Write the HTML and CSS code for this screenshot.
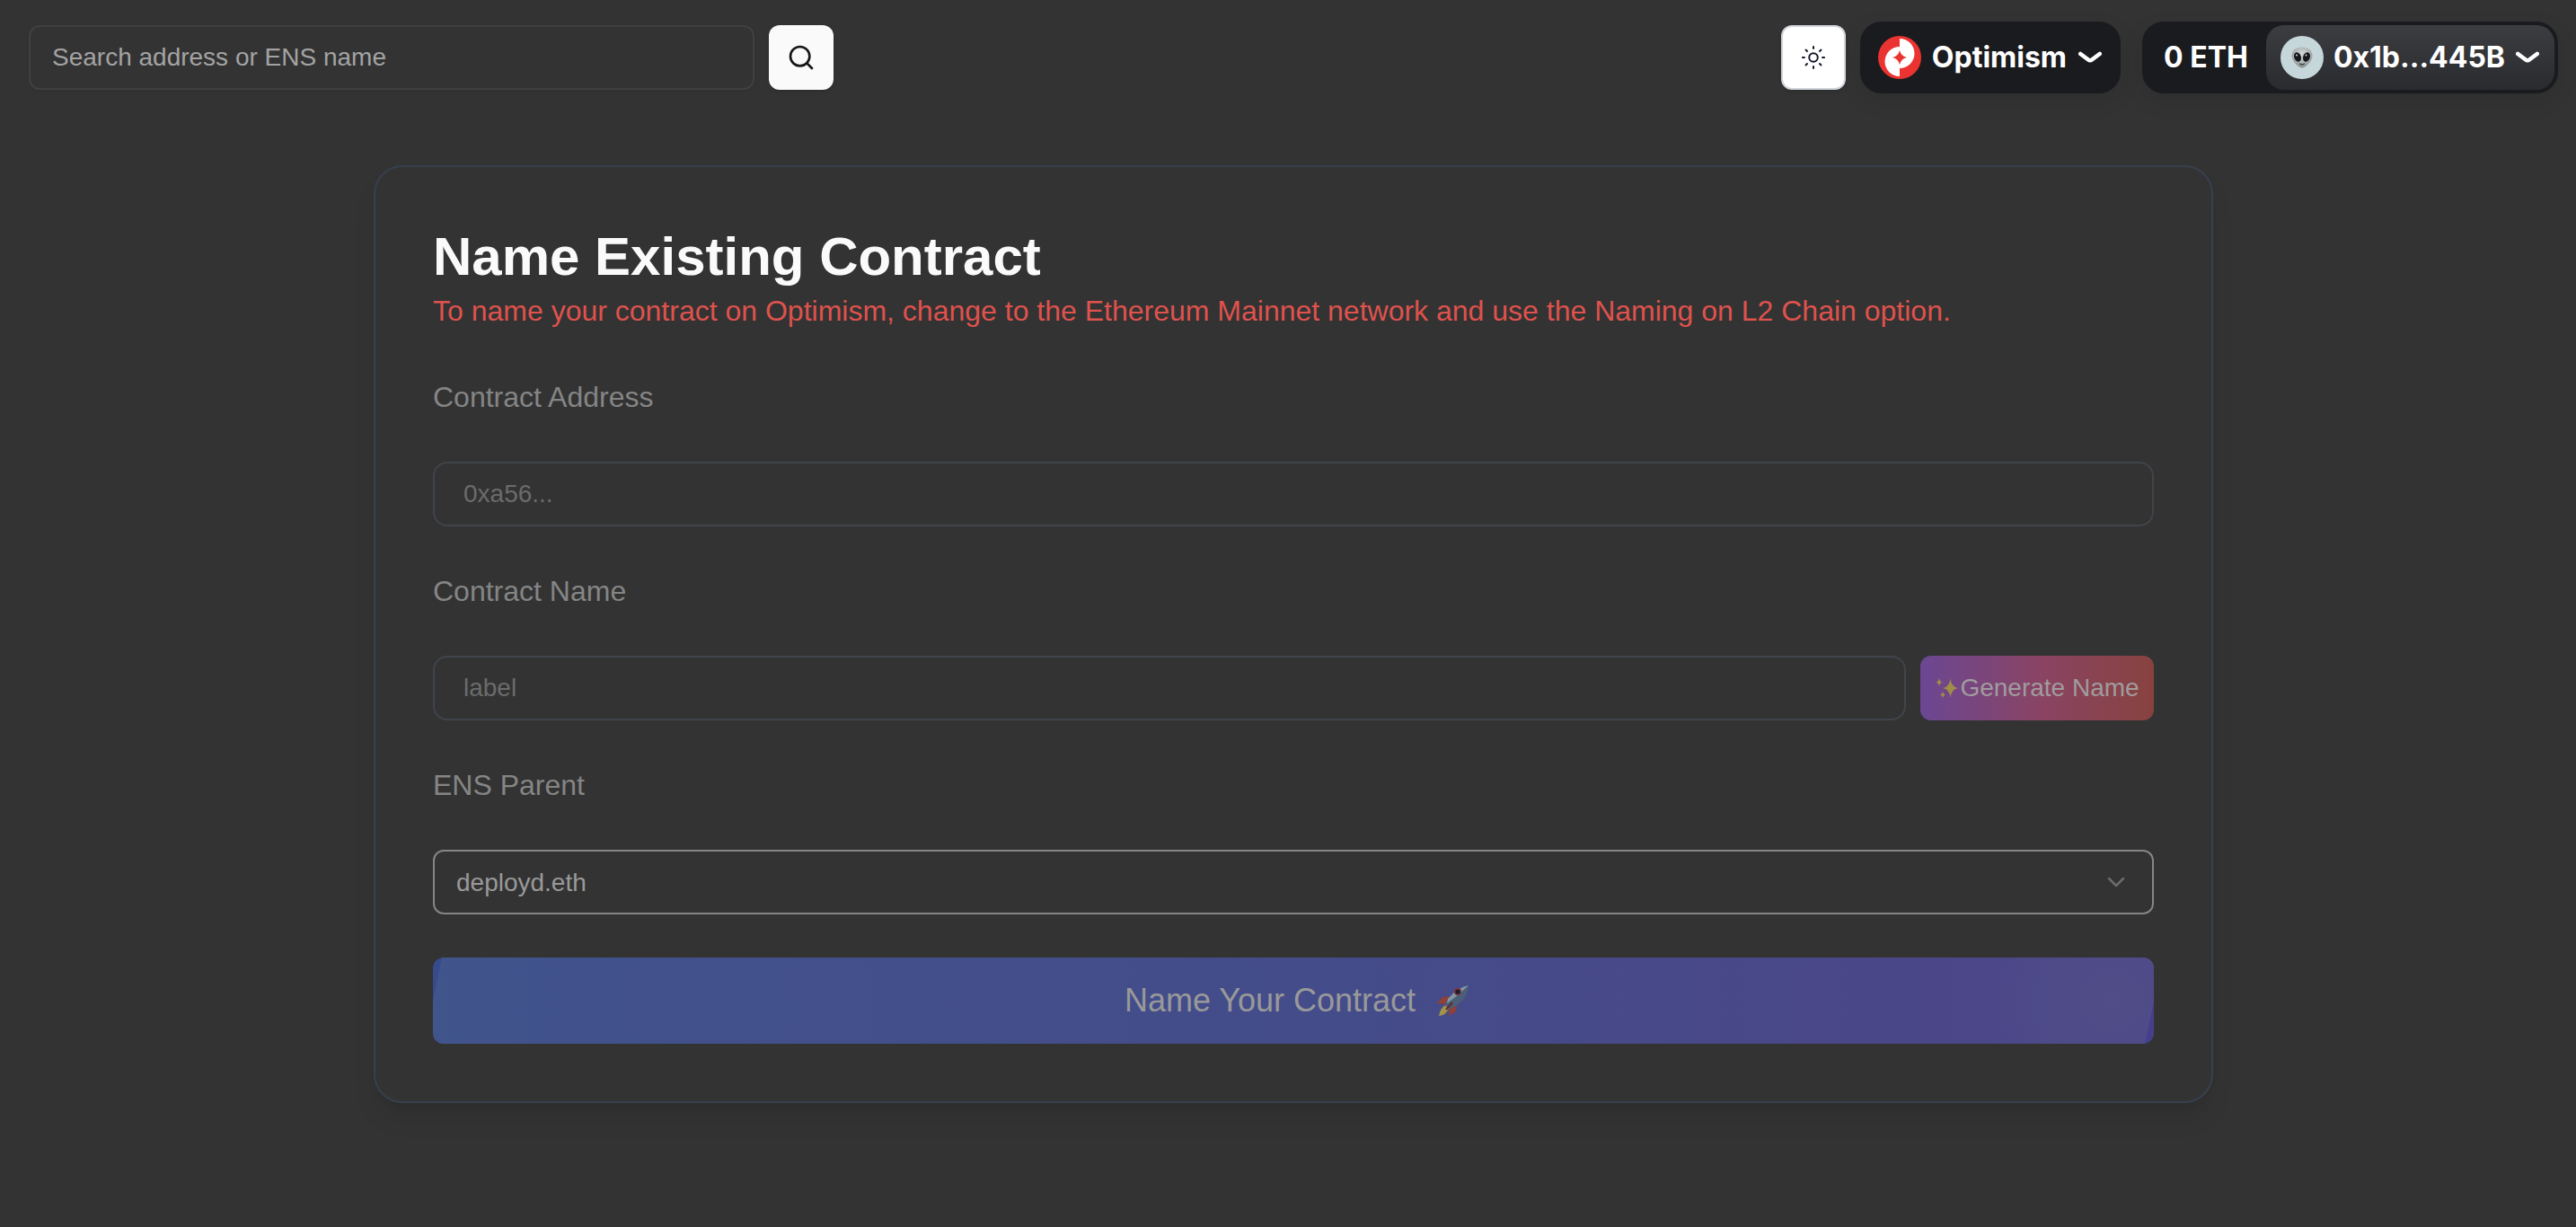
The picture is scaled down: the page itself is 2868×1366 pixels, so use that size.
FILE: index.html
```html
<!DOCTYPE html>
<html lang="en">
<head>
<meta charset="utf-8">
<meta name="viewport" content="width=device-width, initial-scale=1">
<title>Name Existing Contract</title>
<link rel="stylesheet" href="styles.css">
</head>
<body>
<header class="topbar">
  <form class="search" role="search">
    <input class="search-input" type="search" aria-label="Search address or ENS name" placeholder="Search address or ENS name">
    <button class="search-button" type="button" aria-label="Search">
      <svg width="32" height="32" viewBox="0 0 24 24" fill="none" stroke="currentColor" stroke-width="2" stroke-linecap="round" stroke-linejoin="round"><circle cx="11" cy="11" r="8"/><path d="m21 21-4.3-4.3"/></svg>
    </button>
  </form>
  <div class="actions">
    <button class="theme-button" type="button" aria-label="Toggle theme">
      <svg width="28" height="28" viewBox="0 0 24 24" fill="none" stroke="currentColor" stroke-width="1.7"><circle cx="12" cy="12" r="4.100"/><path d="M12 1v3M12 20v3M4.300 4.300l2.200 2.200M17.500 17.500l2.200 2.200M1 12h3M20 12h3M4.300 19.700l2.200-2.200M17.500 6.500l2.200-2.200"/></svg>
    </button>
    <button class="chain-button" type="button">
      <svg width="48" height="48" viewBox="0 0 48 48"><circle cx="24" cy="24" r="24" fill="#eb3431"/><path fill="#fff" d="M24 3a16.500 16.500 0 0 1 0 33v9a16.500 16.500 0 0 1 0-33z"/><path fill="#eb3431" d="M24 16q1.500 6.500 8 8q-6.500 1.500-8 8q-1.500-6.500-8-8q6.500-1.500 8-8z"/></svg>
      <span>Optimism</span>
      <svg width="28" height="14" viewBox="0 0 28 14" fill="none" stroke="currentColor" stroke-width="4.600" stroke-linecap="round" stroke-linejoin="round"><path d="M3.300 3l8.700 6.500q2 1.500 4 0l8.700-6.500"/></svg>
    </button>
    <button class="wallet-button" type="button">
      <span class="balance">0 ETH</span>
      <span class="account">
        <svg width="48" height="48" viewBox="0 0 48 48">
          <defs><radialGradient id="skin" cx=".5" cy=".35" r=".65"><stop offset="0" stop-color="#d5d9da"/><stop offset=".6" stop-color="#aeb3b4"/><stop offset="1" stop-color="#858a8c"/></radialGradient></defs>
          <circle cx="24" cy="24" r="24" fill="#c5d7db"/>
          <path fill="url(#skin)" d="M24 12.500c7 0 11.500 4 11.500 9.500 0 6-7.500 13.500-11.500 13.500S12.500 28 12.500 22c0-5.500 4.500-9.500 11.500-9.500z"/>
          <ellipse cx="19" cy="23.500" rx="3.800" ry="5.300" transform="rotate(-22 19 23.500)" fill="#15181a"/>
          <ellipse cx="29" cy="23.500" rx="3.800" ry="5.300" transform="rotate(22 29 23.500)" fill="#15181a"/>
          <circle cx="18" cy="21.500" r="1" fill="#cfd5d7"/><circle cx="28.500" cy="21.500" r="1" fill="#cfd5d7"/>
          <path d="M21.500 31q2.500 1.800 5 0" fill="none" stroke="#35393b" stroke-width="1.200" stroke-linecap="round"/>
        </svg>
        <span>0x1b...445B</span>
        <svg width="28" height="14" viewBox="0 0 28 14" fill="none" stroke="currentColor" stroke-width="4.600" stroke-linecap="round" stroke-linejoin="round"><path d="M3.300 3l8.700 6.500q2 1.500 4 0l8.700-6.500"/></svg>
      </span>
    </button>
  </div>
</header>

<main class="page">
  <form class="card">
    <div class="intro">
      <h1 class="title">Name Existing Contract</h1>
      <p class="warning">To name your contract on Optimism, change to the Ethereum Mainnet network and use the Naming on L2 Chain option.</p>
    </div>
    <div class="field">
      <label class="label" for="address">Contract Address</label>
      <input class="input" id="address" type="text" placeholder="0xa56..." disabled>
    </div>
    <div class="field">
      <label class="label" for="name">Contract Name</label>
      <div class="name-row">
        <input class="input" id="name" type="text" placeholder="label" disabled>
        <button class="generate" type="button" disabled>
          <svg width="28" height="28" viewBox="0 0 28 28" fill="#a08e48"><path d="M17.500 3q.8 9.700 8.500 11q-7.700 1.300-8.500 11q-.8-9.700-8.500-11q7.700-1.300 8.500-11zM5 2.500q.5 4.400 3.500 5q-3 .6-3.500 5q-.5-4.400-3.500-5q3-.6 3.500-5zM9 17.500q.5 3.500 3 4q-2.500.5-3 4q-.5-3.500-3-4q2.500-.5 3-4z"/></svg>
          <span>Generate Name</span>
        </button>
      </div>
    </div>
    <div class="field">
      <label class="label" for="parent">ENS Parent</label>
      <div class="select-box">
        <select class="select" id="parent" disabled><option>deployd.eth</option></select>
        <svg class="select-caret" width="32" height="32" viewBox="0 0 32 32" fill="none" stroke="currentColor" stroke-width="2.500" stroke-linecap="round" stroke-linejoin="round"><path d="M8 12l8 8 8-8"/></svg>
      </div>
    </div>
    <button class="submit" type="submit" disabled>
      <span>Name Your Contract</span>
      <svg width="36" height="36" viewBox="0 0 36 36">
        <path fill="#8f4038" d="M14 13L6 14 0 21l9 1zM22 24l-1 6-8 5 1-11z"/>
        <path fill="#a3924a" d="M9 23q-6 4-7 12q8-1 11-8z"/>
        <path fill="#4a6078" d="M35 1Q23 3 12 16l-3 6 5 5 7-3Q34 15 35 1z"/>
        <path fill="#8496a4" d="M35 1Q23 3 12 16l-1 5Q24 12 35 1z"/>
        <circle cx="23" cy="8" r="4.200" fill="#7d3542"/><circle cx="23" cy="8" r="2.600" fill="#1c1c2a"/>
        <path stroke="#602a30" stroke-width="2" d="M17 20l-7 8"/>
      </svg>
    </button>
  </form>
</main>
</body>
</html>
```

FILE: styles.css
```css
* {
  box-sizing: border-box;
}

body {
  margin: 0;
  padding-left: 12px;
  min-height: 100vh;
  background: #333333;
  color: #fafafa;
  font-family: "Liberation Sans", Arial, sans-serif;
  font-size: 28px;
}

button,
input,
select {
  margin: 0;
  font: inherit;
}

svg {
  display: block;
  flex: none;
}

.topbar {
  display: flex;
  align-items: center;
  justify-content: space-between;
  padding: 24px 20px;
}

.search {
  display: flex;
  gap: 16px;
  flex: 0 1 896px;
}

.search-input {
  flex: 1;
  min-width: 0;
  height: 72px;
  padding: 0 24px;
  border: 2px solid #404040;
  border-radius: 12px;
  background: transparent;
  color: #fafafa;
  box-shadow: 0 2px 4px rgba(0, 0, 0, 0.05);
  appearance: none;
}

.search-input::placeholder {
  color: #a3a3a3;
  opacity: 1;
}

.search-button,
.theme-button {
  display: grid;
  place-items: center;
  width: 72px;
  height: 72px;
  padding: 0;
  border: 0;
  border-radius: 12px;
  background: #fafafa;
  color: #171717;
  box-shadow: 0 2px 4px rgba(0, 0, 0, 0.1);
}

.theme-button {
  border: 2px solid #d1d5db;
  background: #ffffff;
  color: #111827;
}

.actions {
  display: flex;
  align-items: center;
  font-family: Inter, "Liberation Sans", sans-serif;
  font-size: 32px;
  font-weight: 700;
  line-height: 40px;
}

.chain-button,
.wallet-button {
  display: flex;
  align-items: center;
  height: 80px;
  border: 0;
  border-radius: 24px;
  background: #1a1b1f;
  color: #ffffff;
  box-shadow: 0 8px 24px rgba(0, 0, 0, 0.1);
}

.chain-button {
  gap: 12px;
  margin: 0 24px 0 16px;
  padding: 0 20px;
}

.wallet-button {
  padding: 4px;
}

.balance {
  padding: 0 20px;
}

.account {
  display: flex;
  align-items: center;
  gap: 11px;
  height: 72px;
  padding: 0 16px;
  border-radius: 20px;
  background: linear-gradient(#3c3d41, #2a2b2f);
}

.page {
  padding: 56px 32px;
}

.card {
  display: flex;
  flex-direction: column;
  gap: 48px;
  max-width: 2048px;
  margin: 0 auto;
  padding: 64px;
  border: 2px solid #37404f;
  border-radius: 32px;
  box-shadow: 0 20px 30px -6px rgba(0, 0, 0, 0.1), 0 8px 12px -8px rgba(0, 0, 0, 0.1);
}

.title {
  margin: 0;
  font-size: 60px;
  font-weight: 700;
  line-height: 72px;
}

.warning {
  margin: 0;
  color: #df524d;
  font-size: 32px;
  line-height: 48px;
}

.field {
  display: flex;
  flex-direction: column;
  gap: 48px;
}

.label {
  color: #858585;
  font-size: 32px;
  line-height: 48px;
}

.input {
  width: 100%;
  height: 72px;
  padding: 0 32px;
  border: 2px solid #40454b;
  border-radius: 16px;
  background: transparent;
  color: #999999;
}

.input::placeholder {
  color: #6b6b6b;
  opacity: 1;
}

.name-row {
  display: flex;
  gap: 16px;
}

.name-row .input {
  flex: 1;
  min-width: 0;
}

.generate {
  display: flex;
  align-items: center;
  justify-content: center;
  flex: none;
  min-width: 260px;
  height: 72px;
  padding: 0 16px;
  border: 0;
  border-radius: 12px;
  background: linear-gradient(90deg, #6b4793, #8a4463 52%, #87423f);
  color: #a09c9e;
}

.select-box {
  display: grid;
  align-items: center;
}

.select,
.select-caret {
  grid-area: 1 / 1;
}

.select {
  width: 100%;
  height: 72px;
  padding: 0 24px;
  border: 2px solid #858585;
  border-radius: 12px;
  background: transparent;
  color: #999999;
  opacity: 1;
  appearance: none;
}

.select-caret {
  justify-self: end;
  margin-right: 26px;
  color: #6b6b6b;
  pointer-events: none;
}

.submit {
  display: flex;
  align-items: center;
  justify-content: center;
  gap: 24px;
  height: 96px;
  padding: 0 32px 0 40px;
  border: 0;
  border-radius: 12px;
  background: linear-gradient(90deg, #364a8c, #453f8c);
  color: #999999;
  font-size: 36px;
  isolation: isolate;
  position: relative;
  overflow: hidden;
}

/* Sheen over the base gradient, with two corners cut off */
.submit::before {
  content: "";
  position: absolute;
  inset: 0;
  z-index: -1;
  background:
    radial-gradient(circle at calc(100% - 48px) 48px, #504e88, rgba(80, 78, 136, 0) 140px),
    linear-gradient(90deg, #40558b, #41518b 10%, #444c8a 50%, #4a4788 85%, #4c4889);
  clip-path: polygon(10px 0, 100% 0, 100% 48px, calc(100% - 10px) 100%, 0 100%, 0 48px);
}
```
